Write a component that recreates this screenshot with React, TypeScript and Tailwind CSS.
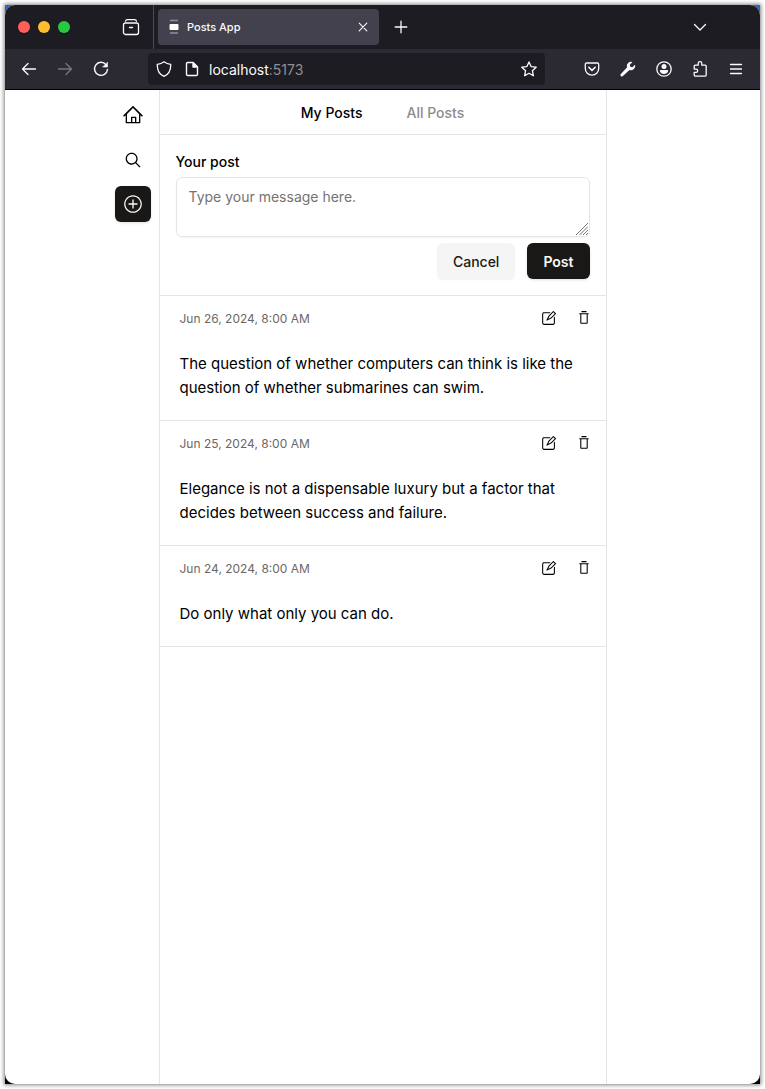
import { RxHome, RxMagnifyingGlass, RxPencil2, RxPlusCircled, RxTrash } from 'react-icons/rx'

const posts = [
  {
    date: 'Jun 26, 2024, 8:00 AM',
    text: 'The question of whether computers can think is like the question of whether submarines can swim.',
  },
  {
    date: 'Jun 25, 2024, 8:00 AM',
    text: 'Elegance is not a dispensable luxury but a factor that decides between success and failure.',
  },
  {
    date: 'Jun 24, 2024, 8:00 AM',
    text: 'Do only what only you can do.',
  },
]

const stroke = {
  fill: 'none',
  stroke: 'currentColor',
  strokeWidth: 1.3,
  strokeLinecap: 'round',
  strokeLinejoin: 'round',
} as const

function TabStrip() {
  return (
    <div className="flex h-11 items-center bg-[#1d1c22] text-[#fbfbfe]">
      <div className="flex w-[108px] shrink-0 items-center gap-2 pl-[13px]">
        <span className="size-3 rounded-full bg-[#ff5f57]" />
        <span className="size-3 rounded-full bg-[#febc2e]" />
        <span className="size-3 rounded-full bg-[#28c840]" />
      </div>
      <button aria-label="View recent browsing" className="flex w-10 shrink-0 pl-[9px]">
        <svg className="size-[18px]" viewBox="0 0 18 18" {...stroke}>
          <path d="M3.500 3.200C3.800 2.200 4.400 1.700 5.400 1.700h7.200c1 0 1.600.5 1.900 1.500" />
          <rect x="1.500" y="5" width="15" height="11.500" rx="2" />
          <path d="M7.500 9.500h3" />
        </svg>
      </button>
      <div className="mr-1 h-full w-px shrink-0 bg-[#4b4a54]" />
      <div className="flex h-9 w-[221px] shrink-0 items-center rounded bg-[#42414d] px-2">
        <svg className="size-4" viewBox="0 0 16 16">
          <path d="M4 1.500h8M4 14h8" stroke="#8b93a5" strokeWidth="1.400" />
          <rect x="3.500" y="5" width="9" height="6" rx="1" fill="#fff" />
        </svg>
        <span className="ml-[5px] grow pt-px text-[11px] font-medium">Posts App</span>
        <button aria-label="Close tab" className="flex size-4 items-center justify-center">
          <svg className="size-4" viewBox="0 0 16 16" {...stroke} strokeWidth="1.100">
            <path d="M4.200 4.200l7.600 7.600M11.800 4.200l-7.600 7.600" />
          </svg>
        </button>
      </div>
      <button aria-label="New tab" className="ml-[14px]">
        <svg className="size-4" viewBox="0 0 16 16" {...stroke}>
          <path d="M8 2.200v11.600M2.200 8h11.600" />
        </svg>
      </button>
      <button aria-label="List all tabs" className="mr-[52px] ml-auto">
        <svg className="size-4" viewBox="0 0 16 16" {...stroke}>
          <path d="M2.500 5.500L8 11l5.500-5.500" />
        </svg>
      </button>
    </div>
  )
}

function Toolbar() {
  return (
    <div className="flex h-[41px] items-center border-b border-black bg-[#2b2a33] text-[#fbfbfe]">
      <div className="flex w-[143px] shrink-0 gap-5 pl-4">
        <button aria-label="Back">
          <svg className="size-4" viewBox="0 0 16 16" {...stroke}>
            <path d="M14.500 8H1.500M7 2.500L1.500 8 7 13.500" />
          </svg>
        </button>
        <button aria-label="Forward" className="text-[#77767e]">
          <svg className="size-4" viewBox="0 0 16 16" {...stroke}>
            <path d="M1.500 8h13M9 2.500L14.500 8 9 13.500" />
          </svg>
        </button>
        <button aria-label="Reload">
          <svg className="size-4" viewBox="0 0 16 16" {...stroke} strokeWidth="1.400">
            <path d="M13 3.600A6.500 6.500 0 1 0 14.500 8.500" />
            <path d="M14.500 1.500v4.500H10z" fill="currentColor" strokeWidth=".6" />
          </svg>
        </button>
      </div>
      <div className="flex h-8 min-w-0 grow items-center rounded bg-[#1d1c22] px-2">
        <svg className="size-4 shrink-0" viewBox="0 0 16 16" {...stroke}>
          <path d="M8 .8c2 1.500 4.200 2.300 6.700 2.600.2 5-1.500 9.800-6.700 11.900C2.800 13.200 1.100 8.400 1.300 3.400 3.800 3.100 6 2.300 8 .8z" />
        </svg>
        <svg className="ml-3 size-4 shrink-0" viewBox="0 0 16 16" {...stroke} strokeWidth="1.400">
          <path d="M3.800 1.500h5.200l4.500 4.500v7.200c0 .8-.5 1.300-1.300 1.300H3.800c-.8 0-1.300-.5-1.300-1.300V2.800c0-.8.5-1.300 1.300-1.300z" />
          <path d="M9 1.500V6h4.500z" fill="currentColor" />
        </svg>
        <span className="ml-[9px] grow pt-px text-sm">
          localhost<span className="text-[#8f8e96]">:5173</span>
        </span>
        <button aria-label="Bookmark this page">
          <svg className="size-4" viewBox="0 0 16 16" {...stroke}>
            <path d="M8 .9l2.100 4.700 5.100.6-3.800 3.500 1 5.100L8 12.300l-4.400 2.500 1-5.100L.8 6.200l5.100-.6z" />
          </svg>
        </button>
      </div>
      <div className="ml-[39px] flex shrink-0 gap-5 pr-4">
        <button aria-label="Save to Pocket">
          <svg className="size-4" viewBox="0 0 16 16" {...stroke}>
            <path d="M2.500 2h11c.7 0 1.200.5 1.200 1.200v4.300a6.700 6.700 0 0 1-13.400 0V3.200C1.300 2.500 1.800 2 2.500 2z" />
            <path d="M4.800 6.300L8 9.400l3.200-3.100" strokeWidth="1.500" />
          </svg>
        </button>
        <button aria-label="Developer tools">
          <svg className="size-4" viewBox="0 0 16 16" fill="currentColor">
            <path d="M15 3.700l-2.700 2.500-2-.5-.5-2L12.500 1a4.200 4.200 0 0 0-5.400 5.300L.9 12.900a1.300 1.300 0 0 0 2 2l6.600-6A4.200 4.200 0 0 0 15 3.700z" />
          </svg>
        </button>
        <button aria-label="Account">
          <svg className="size-4" viewBox="0 0 16 16" fill="currentColor">
            <circle cx="8" cy="8" r="7.200" {...stroke} />
            <circle cx="8" cy="5.500" r="2.500" />
            <path d="M3.800 9h8.400c0 2.500-1.800 4-4.200 4S3.800 11.500 3.800 9z" />
          </svg>
        </button>
        <button aria-label="Extensions">
          <svg className="size-4" viewBox="0 0 16 16" {...stroke}>
            <path d="M6.200 4.200V2.500a1.800 1.800 0 0 1 3.600 0v1.700h3.400c.6 0 1 .4 1 1v8.900c0 .6-.4 1-1 1H3.200c-.6 0-1-.4-1-1v-2.800h1.900a1.600 1.600 0 0 0 0-3.200H2.200V5.200c0-.6.4-1 1-1z" />
          </svg>
        </button>
        <button aria-label="Open application menu">
          <svg className="size-4" viewBox="0 0 16 16" {...stroke}>
            <path d="M2.500 3.500h11M2.500 8h11M2.500 12.500h11" />
          </svg>
        </button>
      </div>
    </div>
  )
}

function Sidebar() {
  return (
    <nav className="flex flex-col items-end gap-2 pt-2 pr-2">
      <a href="#home" aria-label="Home" className="flex size-9 items-center justify-center rounded-md">
        <RxHome className="size-5" />
      </a>
      <a href="#search" aria-label="Search" className="flex size-9 items-center justify-center rounded-md">
        <RxMagnifyingGlass className="size-5" />
      </a>
      <button aria-label="New post" className="flex size-9 items-center justify-center rounded-md bg-[#1a1816] text-stone-50 shadow-sm">
        <RxPlusCircled className="size-5" />
      </button>
    </nav>
  )
}

function PostForm() {
  return (
    <form className="flex flex-col border-b border-[#e5e5e5] p-4" onSubmit={(e) => e.preventDefault()}>
      <label htmlFor="post" className="pt-px pb-[5px] text-sm font-medium">Your post</label>
      <div className="relative flex">
        <textarea
          id="post"
          placeholder="Type your message here."
          className="h-[60px] w-full resize-none rounded-md border border-[#e5e5e5] px-3 py-[9px] text-sm shadow-xs outline-none placeholder:text-[#757370]"
        />
        <svg className="pointer-events-none absolute right-0.5 bottom-0.5 size-3" viewBox="0 0 12 12" fill="none" stroke="#777" strokeWidth="1">
          <path d="M0 12L12 0M3.500 12l8.500-8.500M7 12l5-5M10 12l2-2" />
        </svg>
      </div>
      <div className="mt-1.5 flex justify-end gap-3">
        <button type="button" className="h-9 rounded-md bg-[#f5f5f5] px-4 pt-px text-sm font-medium text-stone-900 shadow-xs">Cancel</button>
        <button type="submit" className="h-9 rounded-md bg-[#1a1816] px-4 pt-px text-sm font-semibold text-stone-50 shadow-sm">Post</button>
      </div>
    </form>
  )
}

export default function App() {
  return (
    <div className="flex min-h-screen flex-col bg-white p-[5px] font-['Inter',sans-serif] text-black">
      <div className="flex grow flex-col bg-linear-to-b from-[#2f62c9] from-10% to-black to-20% shadow-[0_0_4px_1px_rgba(0,0,0,0.5)]">
        <div className="flex grow flex-col overflow-hidden rounded-[10px] bg-white">
          <TabStrip />
          <Toolbar />
          <div className="grid grow grid-cols-[1fr_minmax(0,28rem)_1fr]">
            <Sidebar />
            <main className="border-x border-[#e5e5e5]">
              <div className="flex h-[45px] items-center justify-center gap-11 border-b border-[#e5e5e5] pt-px text-sm font-medium">
                <a href="#my-posts">My Posts</a>
                <a href="#all-posts" className="text-[#8c8c8c]">All Posts</a>
              </div>
              <PostForm />
              {posts.map((post) => (
                <article key={post.date} className="border-b border-[#e5e5e5] pb-5">
                  <div className="flex h-11 items-center pr-[14px] pl-5">
                    <time className="grow pt-px text-xs text-[#6b6864]">{post.date}</time>
                    <div className="flex gap-5">
                      <button aria-label="Edit post"><RxPencil2 className="size-4" /></button>
                      <button aria-label="Delete post"><RxTrash className="size-4" /></button>
                    </div>
                  </div>
                  <p className="mt-3 px-5 text-[15px] leading-6">{post.text}</p>
                </article>
              ))}
            </main>
          </div>
        </div>
      </div>
    </div>
  )
}
